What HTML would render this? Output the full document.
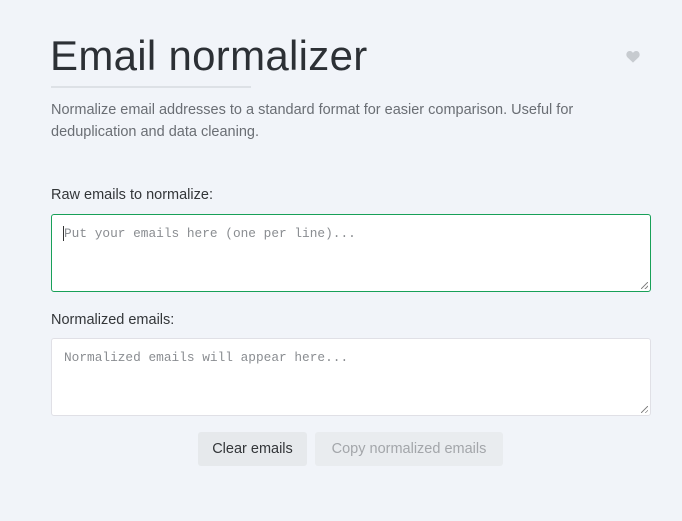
<!DOCTYPE html>
<html><head><meta charset="utf-8"><style>
*{box-sizing:border-box;margin:0;padding:0}
body{width:682px;height:521px;background:#f1f4f9;font-family:"Liberation Sans",sans-serif;color:#333639;position:relative;overflow:hidden}
h1{position:absolute;left:50px;top:32px;font-size:42px;font-weight:400;color:#2c3035;letter-spacing:0.3px;white-space:nowrap}
.ul{position:absolute;left:51px;top:86px;width:200px;height:2px;background:#dde1e6}
.desc{position:absolute;left:51px;top:99px;width:580px;font-size:14.5px;line-height:22px;color:#6a6e74}
.lab{position:absolute;left:51px;font-size:14.5px;color:#333639}
.ta{position:absolute;left:51px;width:600px;height:78px;background:#fff;border:1px solid #e0e0e6;border-radius:3px;font-family:"Liberation Mono",monospace;font-size:12.8px;color:#8a8d91;padding:11px 12px}
.ta.f{border-color:#18a058}
.grip{position:absolute;right:2px;bottom:2px;width:7px;height:7px;background:linear-gradient(135deg,transparent 45%,#888 45%,#888 55%,transparent 55%,transparent 75%,#888 75%,#888 85%,transparent 85%)}
.btn{position:absolute;top:432px;height:34px;border-radius:3px;background:#e6e9ec;font-size:14.5px;line-height:34px;text-align:center}
</style></head><body>
<h1>Email normalizer</h1>
<div class="ul"></div>
<svg style="position:absolute;left:626px;top:50px" width="14" height="13" viewBox="0 0 24 22"><path d="M12 21.5 2.5 12.5C-1 9 .5 2 6 1.5c3-.3 5 1.5 6 3.3 1-1.8 3-3.6 6-3.3 5.5.5 7 7.5 3.5 11z" fill="#c7cbd0"/></svg>
<div class="desc">Normalize email addresses to a standard format for easier comparison. Useful for deduplication and data cleaning.</div>
<div class="lab" style="top:187px">Raw emails to normalize:</div>
<div class="ta f" style="top:214px"><span style="border-left:1px solid #333;margin-left:-1px"></span>Put your emails here (one per line)...<div class="grip"></div></div>
<div class="lab" style="top:312px">Normalized emails:</div>
<div class="ta" style="top:338px">Normalized emails will appear here...<div class="grip"></div></div>
<div class="btn" style="left:198px;width:109px;color:#333639">Clear emails</div>
<div class="btn" style="left:315px;width:188px;color:#a3a6aa;background:#e9ecef">Copy normalized emails</div>
</body></html>
